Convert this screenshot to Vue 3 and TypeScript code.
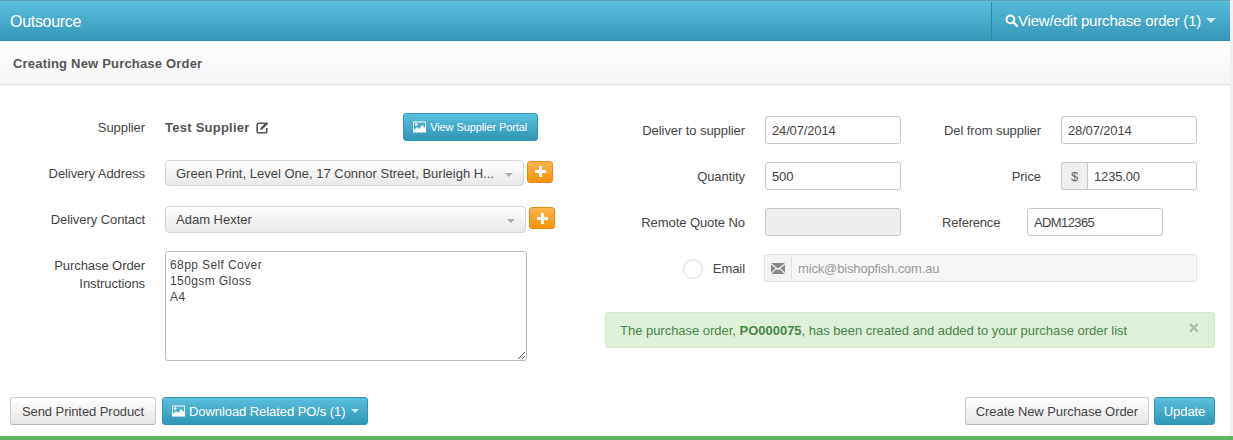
<script setup lang="ts">
const addressLine = 'Green Print, Level One, 17 Connor Street, Burleigh H...';
</script>

<template>
  <div class="page">
    <div class="panel">
      <header class="topbar">
        <span class="brand">Outsource</span>
        <button class="topbtn">
          <svg class="search" width="13" height="13" viewBox="0 0 13 13"><circle cx="5.4" cy="5.4" r="3.9" fill="none" stroke="currentColor" stroke-width="2"/><path d="M8.2 8.2 12 12" stroke="currentColor" stroke-width="2.4" stroke-linecap="round"/></svg>View/edit purchase order (1)<i class="caret light big"></i>
        </button>
      </header>
      <div class="subbar">Creating New Purchase Order</div>
      <main class="form">
        <section class="left">
          <div class="row supplier-row">
            <label class="lab">Supplier</label>
            <strong class="sname">Test Supplier</strong>
            <svg class="edit" width="13" height="13" viewBox="0 0 13 13"><path d="M9 2.2H2.6A1.4 1.4 0 0 0 1.2 3.6v6.8a1.4 1.4 0 0 0 1.4 1.4h6.8a1.4 1.4 0 0 0 1.4-1.4V7" fill="none" stroke="#555" stroke-width="1.6"/><path d="M4.6 6.8 10.4.9l1.8 1.8-5.9 5.9-2.2.4z" fill="#555"/></svg>
            <button class="btn info portal">
              <svg class="pic" width="13" height="12" viewBox="0 0 13 12"><path fill-rule="evenodd" d="M0 .5h13v11H0zM1 1.5v7.5l3-3 2 2 3-4 3 3V1.5zM3.2 2.2a1.4 1.4 0 1 0 0 2.8 1.4 1.4 0 0 0 0-2.8z" fill="currentColor"/></svg>View Supplier Portal
            </button>
          </div>
          <div class="row addr-row">
            <label class="lab">Delivery Address</label>
            <div class="select">{{ addressLine }}<i class="caret grey"></i></div>
            <button class="plus"><svg width="13" height="13" viewBox="0 0 13 13"><path d="M6.5 1v11M1 6.5h11" stroke="#fff" stroke-width="3"/></svg></button>
          </div>
          <div class="row contact-row">
            <label class="lab">Delivery Contact</label>
            <div class="select wide">Adam Hexter<i class="caret grey"></i></div>
            <button class="plus"><svg width="13" height="13" viewBox="0 0 13 13"><path d="M6.5 1v11M1 6.5h11" stroke="#fff" stroke-width="3"/></svg></button>
          </div>
          <div class="row text-row">
            <label class="lab two">Purchase Order Instructions</label>
            <textarea class="area" readonly>68pp Self Cover
150gsm Gloss
A4</textarea>
          </div>
        </section>

        <section class="right">
          <div class="rrow">
            <label class="rlab">Deliver to supplier</label>
            <input class="inp" value="24/07/2014" readonly />
            <label class="rlab2">Del from supplier</label>
            <input class="inp" value="28/07/2014" readonly />
          </div>
          <div class="rrow">
            <label class="rlab">Quantity</label>
            <input class="inp" value="500" readonly />
            <label class="rlab2">Price</label>
            <div class="group">
              <span class="addon">$</span>
              <input class="inp joined" value="1235.00" readonly />
            </div>
          </div>
          <div class="rrow">
            <label class="rlab">Remote Quote No</label>
            <input class="inp off" readonly />
            <label class="ref-lab">Reference</label>
            <input class="inp ref-inp" value="ADM12365" readonly />
          </div>
          <div class="rrow">
            <label class="rlab email-lab"><span class="radio"></span>Email</label>
            <div class="group mail">
              <span class="addon off-addon">
                <svg width="14" height="11" viewBox="0 0 14 11"><path d="M0 0h14L7 5.6zM0 1.6v8.2l4.6-4.6zM14 1.6v8.2L9.4 5.2zM5.4 5.9 7 7.2l1.6-1.3 4.9 5H.5z" fill="#8a8a8a"/></svg>
              </span>
              <input class="inp joined emailinp" value="mick@bishopfish.com.au" readonly />
            </div>
          </div>
          <div class="alert">
            <span>The purchase order, <b>PO000075</b>, has been created and added to your purchase order list</span>
            <span class="close">×</span>
          </div>
        </section>
      </main>
      <footer class="actions">
        <div class="act-left">
          <button class="btn plain send">Send Printed Product</button>
          <button class="btn info dl">
            <svg class="pic" width="13" height="12" viewBox="0 0 13 12"><path fill-rule="evenodd" d="M0 .5h13v11H0zM1 1.5v7.5l3-3 2 2 3-4 3 3V1.5zM3.2 2.2a1.4 1.4 0 1 0 0 2.8 1.4 1.4 0 0 0 0-2.8z" fill="currentColor"/></svg>Download Related PO/s (1)<i class="caret light"></i>
          </button>
        </div>
        <div class="act-right">
          <button class="btn plain">Create New Purchase Order</button>
          <button class="btn info update">Update</button>
        </div>
      </footer>
    </div>
    <div class="greenline"></div>
  </div>
</template>

<style>
html, body { margin: 0; background: #fff; overflow: hidden; }
</style>

<style scoped>
* { box-sizing: border-box; }
.page { width: 1233px; height: 440px; display: flex; flex-direction: column; font-family: "Liberation Sans", Arial, sans-serif; font-size: 13px; color: #444; background: #f0f0f0; }
.panel { width: 1230px; height: 436px; background: #fff; display: flex; flex-direction: column; }
.greenline { height: 4px; background: #5cb85c; width: 1233px; }
.topbar { height: 41px; display: flex; justify-content: space-between; align-items: stretch; background: linear-gradient(#5bc0de, #3497b6); border-top: 1px solid #5a9fb5; border-bottom: 1px solid #2f8aa8; padding-right: 1px; }
.brand { font-size: 16px; color: #fff; padding-left: 10px; line-height: 41px; letter-spacing: -0.3px; }
.topbtn { width: 238px; margin-top: 1px; border: 0; border-left: 1px solid #2f8aa8; background: linear-gradient(#55b9d8, #3797b6); color: #fff; font: 15px "Liberation Sans", Arial, sans-serif; letter-spacing: -0.18px; display: flex; align-items: center; padding: 0 0 1px 13px; }
.caret { display: inline-block; width: 0; height: 0; border-left: 4px solid transparent; border-right: 4px solid transparent; border-top: 4px solid #aaa; }
.caret.light { border-top-color: #d0eaf3; margin-left: 5px; }
.caret.big { border-left-width: 5px; border-right-width: 5px; border-top-width: 5px; margin-left: 5px; }
.subbar { height: 44px; background: linear-gradient(#fff, #f5f5f5); border-bottom: 1px solid #ddd; padding-left: 13px; line-height: 45px; font-weight: 700; font-size: 13px; color: #555; letter-spacing: 0.19px; }
.form { display: flex; height: 312px; }
.left { width: 605px; padding-top: 28px; }
.row { display: flex; }
.lab { width: 145px; text-align: right; margin-right: 20px; color: #444; flex: none; line-height: 16px; padding-top: 1px; letter-spacing: -0.07px; }
.supplier-row { height: 28px; align-items: center; }
.sname { font-weight: 700; font-size: 13px; color: #555; letter-spacing: 0.25px; }
.edit { margin-left: 6px; }
.portal { margin-left: 134px; width: 135px; height: 28px; white-space: nowrap; }
.addr-row { margin-top: 19px; height: 26px; align-items: center; }
.contact-row { margin-top: 20px; height: 27px; align-items: center; }
.select { width: 359px; height: 100%; border: 1px solid #d5d5d5; border-radius: 4px; background: linear-gradient(#fff, #e8e8e8); line-height: 26px; padding-left: 10px; color: #444; position: relative; flex: none; }
.select.wide { width: 361px; }
.select .caret { position: absolute; right: 10px; top: 12px; border-top-color: #aaa; }
.plus { width: 26px; height: 22px; margin-left: 3px; padding: 0; border: 1px solid #e58a0f; border-radius: 3px; background: linear-gradient(#fbb450, #f89406); display: flex; align-items: center; justify-content: center; margin-top: -3px; }
.text-row { margin-top: 18px; }
.lab.two { padding-left: 30px; line-height: 18px; padding-top: 6px; }
.area { width: 362px; height: 110px; border: 1px solid #bbb; border-radius: 3px; padding: 5px 4px; font: 12px/16px "Liberation Sans", Arial, sans-serif; color: #444; letter-spacing: 0.4px; outline: none; display: block; }
.right { flex: 1; padding-top: 31px; padding-right: 15px; }
.rrow { display: flex; align-items: center; height: 28px; margin-bottom: 18px; }
.rlab, .rlab2 { width: 140px; text-align: right; margin-right: 20px; flex: none; padding-top: 1px; letter-spacing: -0.07px; }
.ref-lab { width: 58px; margin-left: 41px; margin-right: 27px; flex: none; white-space: nowrap; padding-top: 1px; letter-spacing: -0.2px; }
.inp { width: 136px; height: 28px; border: 1px solid #c8c8c8; border-radius: 3px; padding: 0 6px; font: 13px "Liberation Sans", Arial, sans-serif; color: #444; letter-spacing: -0.15px; outline: none; background: #fff; flex: none; }
.inp.ref-inp { letter-spacing: -0.6px; }
.inp.off { background: #eee; }
.group { display: flex; width: 136px; height: 28px; }
.addon { width: 26px; flex: none; background: #eee; border: 1px solid #c8c8c8; border-right: 0; border-radius: 3px 0 0 3px; display: flex; align-items: center; justify-content: center; color: #666; }
.inp.joined { flex: 1; width: auto; min-width: 0; border-radius: 0 3px 3px 0; }
.email-lab { display: flex; align-items: center; justify-content: flex-end; }
.radio { width: 20px; height: 20px; border-radius: 50%; border: 1px solid #ddd; margin-right: 10px; background: #fff; box-shadow: inset 0 1px 1px #eee; }
.group.mail { width: 433px; margin-left: -1px; }
.off-addon { background: #f2f2f2; border-color: #e2e2e2; width: 27px; }
.emailinp { background: #f6f6f6; border-color: #e2e2e2; color: #999; }
.alert { height: 36px; margin-top: 30px; background: #dff0d8; border: 1px solid #d6e9c6; border-radius: 3px; padding: 0 14px; color: #468847; display: flex; justify-content: space-between; align-items: center; letter-spacing: -0.02px; }
.close { font-weight: 700; font-size: 18px; color: #a9baa4; margin-top: -4px; margin-right: 1px; }
.actions { flex: 1; display: flex; justify-content: space-between; padding: 0 15px 11px 10px; align-items: flex-end; }
.act-left, .act-right { display: flex; gap: 6px; }
.act-right { gap: 5px; }
.btn { height: 28px; border-radius: 3px; font: 13px "Liberation Sans", Arial, sans-serif; letter-spacing: -0.07px; padding: 0 10px; display: inline-flex; align-items: center; justify-content: center; }
.btn.portal { font-size: 11px; letter-spacing: -0.1px; padding: 0; }
.btn.update { width: 61px; padding: 0; }
.btn.send { width: 146px; padding: 0; }
.btn.dl { padding: 0 8px 0 9px; }
.plain { background: linear-gradient(#fff, #e6e6e6); border: 1px solid #ccc; border-bottom-color: #b5b5b5; color: #444; }
.info { background: linear-gradient(#5bc0de, #2f96b4); border: 1px solid #2f96b4; color: #fff; }
.pic { margin-right: 4px; }
</style>
